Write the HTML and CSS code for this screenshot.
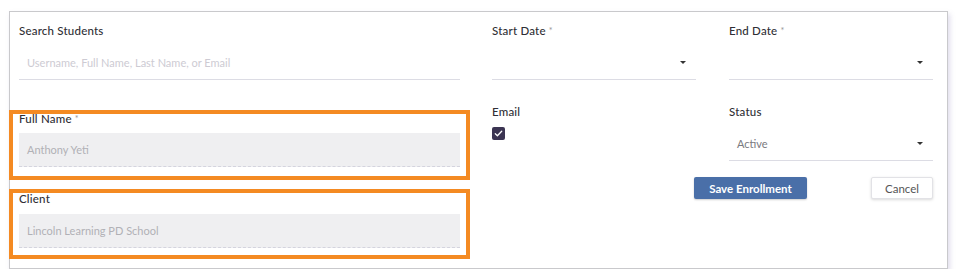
FILE: index.html
```html
<!DOCTYPE html>
<html lang="en">
<head>
  <meta charset="UTF-8" />
  <title>Enrollment</title>
  <link rel="stylesheet" href="styles.css">
</head>
<body>
  <div class="card">
    <div class="left-col">
      <div class="field">
        <label>Search Students</label>
        <div class="line-input">
          <span class="placeholder">Username, Full Name, Last Name, or Email</span>
        </div>
      </div>

      <div class="field group highlight first">
        <label>Full Name <span class="req">*</span></label>
        <div class="readonly">Anthony Yeti</div>
      </div>

      <div class="field group highlight second">
        <label>Client</label>
        <div class="readonly">Lincoln Learning PD School</div>
      </div>
    </div>

    <div class="right-col">
      <div class="field">
        <label>Start Date <span class="req">*</span></label>
        <div class="line-input select"><span></span><i class="caret"></i></div>
      </div>
      <div class="field">
        <label>End Date <span class="req">*</span></label>
        <div class="line-input select"><span></span><i class="caret"></i></div>
      </div>

      <div class="field row2">
        <label>Email</label>
        <div class="checkbox">
          <svg width="13" height="13" viewBox="0 0 13 13">
            <rect width="13" height="13" rx="2" fill="#3b3452"/>
            <path d="M3.3 6.8 L5.4 8.8 L9.7 4.3" fill="none" stroke="#fff" stroke-width="1.3" stroke-linecap="round" stroke-linejoin="round"/>
          </svg>
        </div>
      </div>
      <div class="field row2">
        <label>Status</label>
        <div class="line-input select status"><span class="value">Active</span><i class="caret"></i></div>
      </div>

      <div class="actions">
        <button class="btn-primary">Save Enrollment</button>
        <button class="btn-secondary">Cancel</button>
      </div>
    </div>
  </div>
</body>
</html>
```

FILE: styles.css
```css
* {
  box-sizing: border-box;
  margin: 0;
  padding: 0;
}

body {
  font-family: 'Lato', 'Noto Sans', sans-serif;
  font-size: 11px;
  color: #333;
  background: #fff;
  padding: 11px 13px 0 9px;
}

.card {
  width: 939px;
  height: 258px;
  border: 1px solid #c9c9cc;
  box-shadow: 2px 3px 5px rgba(130, 120, 180, 0.25);
  padding: 12px 13px 0 9px;
  display: flex;
  gap: 32px;
}

.left-col {
  width: 441px;
  display: flex;
  flex-direction: column;
}

.right-col {
  width: 441px;
  display: grid;
  grid-template-columns: 204px 204px;
  column-gap: 33px;
  align-content: start;
}

label {
  display: block;
  line-height: 14px;
  font-size: 11.5px;
  letter-spacing: 0.2px;
  color: #2f2f35;
  font-weight: 500;
}

.req {
  color: #999;
  font-size: 9px;
  vertical-align: top;
}

.line-input {
  height: 35px;
  margin-top: 7px;
  border-bottom: 1px solid #dcdce4;
  display: flex;
  align-items: center;
  padding: 0 8px;
}

.placeholder {
  color: #cdcbd3;
}

.select {
  justify-content: space-between;
  padding: 0 10px 0 8px;
}

.caret {
  width: 0;
  height: 0;
  border-left: 3px solid transparent;
  border-right: 3px solid transparent;
  border-top: 3px solid #333;
}

.group {
  position: relative;
}

.first {
  margin-top: 32px;
}

.second {
  margin-top: 25px;
}

.readonly {
  margin-top: 7px;
  height: 34px;
  background: #efeff1;
  border-bottom: 1px dashed #d4d4de;
  display: flex;
  align-items: center;
  padding: 0 8px;
  color: #b1b1b6;
}

.second .readonly {
  margin-top: 8px;
}

.highlight::after {
  content: '';
  position: absolute;
  left: -10px;
  right: -10px;
  top: -2px;
  bottom: -13px;
  border: 4px solid #f48a22;
  pointer-events: none;
}

.second::after {
  top: -3px;
  bottom: -11px;
}

.row2 {
  margin-top: 25px;
}

.checkbox {
  margin-top: 8px;
  height: 13px;
  line-height: 0;
}

.status {
  margin-top: 8px;
  height: 34px;
}

.status .value {
  color: #7a7a80;
}

.actions {
  grid-column: 1 / 3;
  display: flex;
  justify-content: flex-end;
  gap: 64px;
  margin-top: 16px;
}

.actions button {
  font-family: inherit;
  font-size: 11.5px;
  height: 22px;
  border-radius: 2px;
  cursor: pointer;
}

.btn-primary {
  width: 113px;
  background: #4a6fa8;
  color: #fff;
  border: none;
  font-weight: 700;
  box-shadow: 0 1px 2px rgba(0, 0, 0, 0.2);
}

.btn-secondary {
  width: 62px;
  background: #fff;
  color: #555;
  border: 1px solid #e2e2e6;
  box-shadow: 0 1px 3px rgba(0, 0, 0, 0.15);
}
```
